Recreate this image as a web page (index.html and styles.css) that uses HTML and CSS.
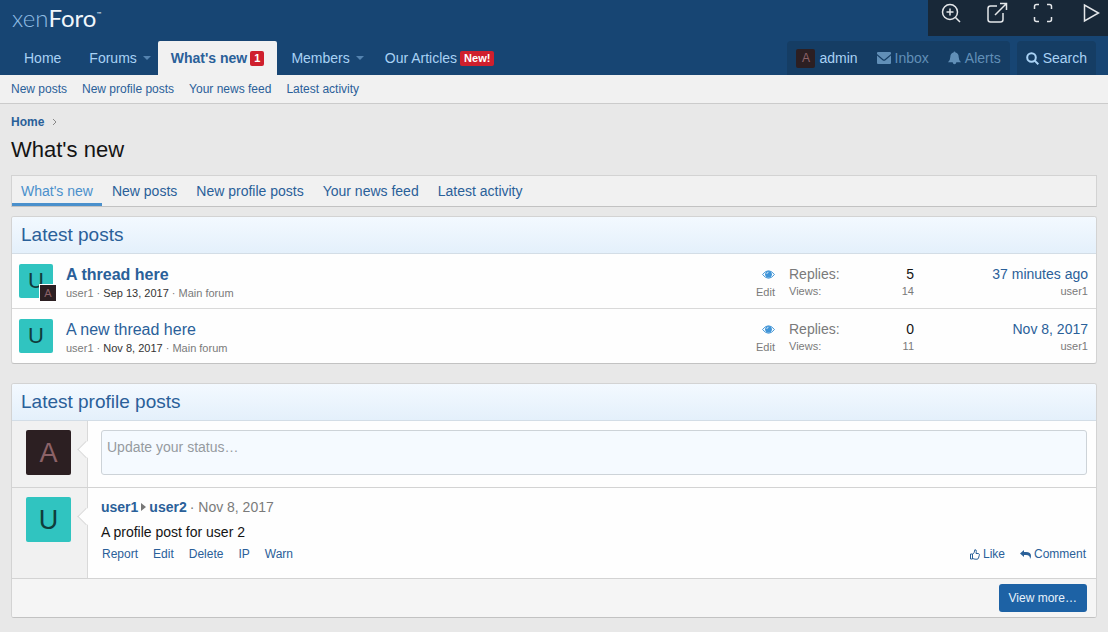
FILE: index.html
```html
<!DOCTYPE html>
<html lang="en">
<head>
<meta charset="utf-8">
<title>What's new | xenForo</title>
<link rel="stylesheet" href="styles.css">
</head>
<body>
<header class="header">
  <a class="logo" href="#"><span class="logo-soft">xen</span>Foro<span class="logo-mark">™</span></a>
  <nav class="nav">
    <div class="nav-item"><a class="nav-link" href="#">Home</a></div>
    <div class="nav-item"><a class="nav-link has-menu" href="#">Forums</a><button class="caret" aria-label="Forums menu"></button></div>
    <div class="nav-item selected"><a class="nav-link" href="#">What's new <span class="badge">1</span></a></div>
    <div class="nav-item"><a class="nav-link has-menu" href="#">Members</a><button class="caret" aria-label="Members menu"></button></div>
    <div class="nav-item"><a class="nav-link" href="#">Our Articles <span class="badge">New!</span></a></div>
    <div class="account">
      <a class="account-link strong" href="#"><span class="avatar avatar-xs dark">A</span>admin</a>
      <a class="account-link" href="#"><svg width="14" height="12" viewBox="0 0 14 12"><path fill="currentColor" d="M1 0h12q1 0 1 1v1L8 7q-1 1-2 0L0 2V1q0-1 1-1zM0 3.600l5.500 4.700q1.500 1 3 0L14 3.600V11q0 1-1 1H1q-1 0-1-1z"/></svg>Inbox</a>
      <a class="account-link" href="#"><svg width="13" height="14" viewBox="0 0 14 14"><path fill="currentColor" d="M7 0q1 0 1 1.200Q11.500 2 11.500 6q0 3.500 2.500 5.500H9q-.3 2.300-2 2.300T5 11.500H0Q2.500 9.500 2.500 6q0-4 3.500-4.800Q6 0 7 0z"/></svg>Alerts</a>
    </div>
    <a class="account-link strong search" href="#"><svg width="13" height="13" viewBox="0 0 13 13" fill="none" stroke="currentColor" stroke-width="2"><circle cx="5.500" cy="5.500" r="4.300"/><path d="M8.600 8.600l3.700 3.700"/></svg>Search</a>
  </nav>
</header>
<div class="viewer-tools">
  <button aria-label="Zoom in"><svg width="22" height="22" viewBox="0 0 22 22"><circle cx="10" cy="10" r="7.500"/><path d="M15.500 15.500L20 20M10 6.500v7M6.500 10h7"/></svg></button>
  <button aria-label="Open in new window"><svg width="22" height="22" viewBox="0 0 22 22"><path d="M11 4H4.500Q2 4 2 6.500v11Q2 20 4.500 20h10q2.500 0 2.500-2.500V11M14 1.500h6.500V8M20.500 1.500L9 13"/></svg></button>
  <button aria-label="Full screen"><svg width="22" height="22" viewBox="0 0 22 22"><path d="M2.500 7V4.500q0-2 2-2H7M15 2.500h2.500q2 0 2 2V7M19.500 15v2.500q0 2-2 2H15M7 19.500H4.500q-2 0-2-2V15"/></svg></button>
  <button aria-label="Play"><svg width="22" height="22" viewBox="0 0 22 22"><path d="M6.500 3v16l14-8z"/></svg></button>
</div>
<nav class="subnav">
  <a href="#">New posts</a><a href="#">New profile posts</a><a href="#">Your news feed</a><a href="#">Latest activity</a>
</nav>
<main class="page">
  <nav class="crumbs"><a href="#">Home</a><svg width="5" height="8" viewBox="0 0 5 8" fill="none" stroke="#888"><path d="M1 1l3 3-3 3"/></svg></nav>
  <h1 class="title">What's new</h1>
  <nav class="tabs">
    <a class="active" href="#">What's new</a><a href="#">New posts</a><a href="#">New profile posts</a><a href="#">Your news feed</a><a href="#">Latest activity</a>
  </nav>
  <section class="block">
    <h2 class="block-title">Latest posts</h2>
    <article class="thread">
      <div class="thread-avatar"><span class="avatar avatar-s teal">U</span><span class="avatar avatar-mini dark">A</span></div>
      <div class="thread-main">
        <a class="thread-title unread" href="#">A thread here</a>
        <div class="minor">user1 · <a class="date" href="#">Sep 13, 2017</a> · Main forum</div>
      </div>
      <div class="thread-extra">
        <svg width="13" height="9" viewBox="0 0 13 9"><path d="M.5 4.500Q6.500-3 12.500 4.500 6.500 12 .5 4.500z" fill="#fff" stroke="#4597d6"/><circle cx="6.500" cy="4.300" r="3.400" fill="#3f94d8"/><path d="M4.800 4q0-1.700 1.700-1.700" fill="none" stroke="#fff" stroke-width=".7"/></svg>
        <a class="minor" href="#">Edit</a>
      </div>
      <dl class="stats"><dt>Replies:</dt><dd>5</dd><dt class="minor">Views:</dt><dd class="minor">14</dd></dl>
      <div class="latest"><a href="#">37 minutes ago</a><span class="minor">user1</span></div>
    </article>
    <article class="thread">
      <div class="thread-avatar"><span class="avatar avatar-s teal">U</span></div>
      <div class="thread-main">
        <a class="thread-title" href="#">A new thread here</a>
        <div class="minor">user1 · <a class="date" href="#">Nov 8, 2017</a> · Main forum</div>
      </div>
      <div class="thread-extra">
        <svg width="13" height="9" viewBox="0 0 13 9"><path d="M.5 4.500Q6.500-3 12.500 4.500 6.500 12 .5 4.500z" fill="#fff" stroke="#4597d6"/><circle cx="6.500" cy="4.300" r="3.400" fill="#3f94d8"/><path d="M4.800 4q0-1.700 1.700-1.700" fill="none" stroke="#fff" stroke-width=".7"/></svg>
        <a class="minor" href="#">Edit</a>
      </div>
      <dl class="stats"><dt>Replies:</dt><dd>0</dd><dt class="minor">Views:</dt><dd class="minor">11</dd></dl>
      <div class="latest"><a href="#">Nov 8, 2017</a><span class="minor">user1</span></div>
    </article>
  </section>
  <section class="block">
    <h2 class="block-title">Latest profile posts</h2>
    <div class="message">
      <div class="message-user"><span class="avatar avatar-m dark">A</span></div>
      <div class="message-body"><textarea class="status" aria-label="Update your status" placeholder="Update your status…"></textarea></div>
    </div>
    <article class="message">
      <div class="message-user"><span class="avatar avatar-m teal">U</span></div>
      <div class="message-body">
        <div class="byline"><a href="#">user1</a><svg width="5" height="8" viewBox="0 0 5 8"><path fill="#777" d="M0 0l5 4-5 4z"/></svg><a href="#">user2</a><span class="byline-date">· Nov 8, 2017</span></div>
        <p class="text">A profile post for user 2</p>
        <div class="actions">
          <a href="#">Report</a><a href="#">Edit</a><a href="#">Delete</a><a href="#">IP</a><a href="#">Warn</a>
          <a class="push" href="#"><svg width="10" height="11" viewBox="0 0 10 11" fill="none" stroke="currentColor"><path d="M.5 5h2v5h-2zM2.500 5.500Q4.800 3.500 4.800.8 6.500.3 6.300 2.500L6 4.500h2.500q1.200.5.800 1.700L8.500 9q-.3 1.200-1.500 1.200H5L2.500 9.500"/></svg>Like</a>
          <a href="#"><svg width="11" height="9" viewBox="0 0 11 9"><path fill="currentColor" d="M4 0v2h2q5 0 5 4 0 1.500-1 3 .3-4-4-4H4v2L0 3.500z"/></svg>Comment</a>
        </div>
      </div>
    </article>
    <footer class="block-footer"><button class="button">View more…</button></footer>
  </section>
</main>
</body>
</html>
```

FILE: styles.css
```css
* { box-sizing: border-box; }
body {
  margin: 0;
  background: #e8e8e8;
  color: #141414;
  font: 14px/20px "Liberation Sans", Arial, sans-serif;
}
a { color: #2a6099; text-decoration: none; }
button { border: 0; padding: 0; background: none; font: inherit; cursor: pointer; }
h1, h2, p, dl, dd { margin: 0; font-weight: 400; }
svg { flex: none; }

.header { background: #174573; }
.logo {
  display: flex;
  width: max-content;
  padding: 3px 0 8px 12px;
  color: #f0f6fb;
  font: 400 24px/30px Lato, sans-serif;
}
.logo-soft { color: #8fbce4; font-weight: 300; }
.logo-mark { font-size: 6px; line-height: 22px; }
.nav { display: flex; padding: 0 12px 0 10px; }
.nav-item { display: flex; height: 34px; border-radius: 2px 2px 0 0; }
.nav-link { display: flex; align-items: center; gap: 3px; padding: 0 14px; color: #a9d2f5; }
.nav-link.has-menu { padding-right: 0; }
.selected { background: #f1f1f1; }
.selected .nav-link { padding: 0 13px; color: #2a6099; font-weight: 700; }
.caret { width: 21px; display: flex; align-items: center; justify-content: center; }
.caret::before { content: ""; border: 4px solid transparent; border-top-color: #5483b0; border-bottom: 0; }
.badge {
  padding: 0 4px;
  border-radius: 2px;
  background: #cf1f2d;
  color: #fff;
  font-size: 11px;
  font-weight: 700;
  line-height: 15px;
}
.account { display: flex; gap: 1px; margin-left: auto; border-radius: 4px 4px 0 0; background: #153d64; }
.account-link { display: flex; align-items: center; gap: 4px; padding: 0 9px; height: 34px; color: #618fb7; }
.account-link.strong { color: #a9d2f5; }
.search { margin-left: 7px; border-radius: 4px 4px 0 0; background: #153d64; }

.viewer-tools {
  position: absolute;
  top: 0;
  right: 0;
  display: flex;
  gap: 24px;
  padding: 2px 8px 12px 12px;
  background: #182838;
}
.viewer-tools svg { display: block; fill: none; stroke: #e4e7ea; stroke-width: 1.5; }

.subnav {
  display: flex;
  gap: 15px;
  padding: 4px 11px;
  border-bottom: 1px solid #cbcbcb;
  background: #f1f1f1;
  font-size: 12px;
}
.page { padding: 9px 11px 14px; }
.crumbs { display: flex; align-items: center; gap: 8px; font-size: 12px; font-weight: 700; line-height: 18px; }
.title { padding: 5px 0 11px; font-size: 22px; line-height: 28px; }
.tabs {
  display: flex;
  gap: 1px;
  margin-bottom: 9px;
  border: 1px solid #d3d3d3;
  border-bottom-color: #c2c2c2;
  background: #f1f1f1;
}
.tabs a { padding: 5px 9px 2px; border-bottom: 3px solid transparent; }
.tabs .active { border-color: #4a90cc; color: #4a90cc; }

.block {
  margin-bottom: 19px;
  border: 1px solid #d3d3d3;
  border-bottom-color: #c2c2c2;
  border-radius: 3px;
  background: #fefefe;
}
.block-title {
  padding: 5px 9px;
  border-bottom: 1px solid #d3dde6;
  border-radius: 2px 2px 0 0;
  background: linear-gradient(#f3f9ff, #e4f0fb);
  color: #2a6099;
  font-size: 19px;
  line-height: 26px;
}
.minor { color: #7a7a7a; font-size: 11px; line-height: 14px; }
.avatar { display: flex; align-items: center; justify-content: center; border-radius: 2px; }
.teal { background: #30c4c0; color: #0f3d3c; }
.dark { background: #2c1f22; color: #8c6268; }
.avatar-xs { width: 19px; height: 19px; font-size: 12px; }
.avatar-s { width: 34px; height: 34px; font-size: 22px; }
.avatar-m { width: 45px; height: 45px; font-size: 27px; }
.avatar-mini {
  position: absolute;
  right: -4px;
  bottom: -4px;
  width: 18px;
  height: 18px;
  border: 1px solid #fff;
  border-radius: 0;
  font-size: 11px;
}

.thread { display: flex; align-items: flex-start; padding: 10px 8px 8px 7px; }
.thread + .thread { border-top: 1px solid #d9d9d9; }
.thread-avatar { position: relative; margin-right: 13px; }
.thread-main { flex: 1; }
.thread-title { display: block; font-size: 16px; line-height: 22px; }
.unread { font-weight: 700; }
.date { color: #333; }
.thread-extra { display: flex; flex-direction: column; align-items: flex-end; gap: 6px; padding-top: 6px; }
.stats { display: grid; grid-template-columns: 1fr auto; width: 125px; margin-left: 14px; color: #7a7a7a; }
.stats dd { text-align: right; }
.stats dd:not(.minor) { color: #141414; }
.latest { display: flex; flex-direction: column; align-items: flex-end; width: 174px; }

.message { display: flex; }
.message + .message { border-top: 1px solid #d3d3d3; }
.message-user { position: relative; padding: 9px 16px 12px 14px; border-right: 1px solid #d9d9d9; background: #f1f1f1; }
.message-user::after {
  content: "";
  position: absolute;
  top: 22px;
  right: -6px;
  width: 11px;
  height: 11px;
  border: 1px solid #d9d9d9;
  border-top-color: transparent;
  border-right-color: transparent;
  background: #fefefe;
  transform: rotate(45deg);
}
.message-body { flex: 1; padding: 9px 9px 12px 13px; }
.status {
  display: block;
  width: 100%;
  height: 45px;
  padding: 6px 5px;
  border: 1px solid #cdd3d8;
  border-radius: 3px;
  background: #f5faff;
  font: inherit;
  resize: none;
}
.status::placeholder { color: #959b9f; }
.byline { display: flex; align-items: center; gap: 3px; }
.byline a { font-weight: 700; }
.byline-date { color: #7a7a7a; }
.text { padding: 5px 0 2px; }
.actions { display: flex; gap: 15px; padding: 0 1px 2px; font-size: 12px; }
.actions a { display: flex; align-items: center; gap: 3px; }
.push { margin-left: auto; }
.block-footer { display: flex; justify-content: flex-end; padding: 5px 9px; border-top: 1px solid #d3d3d3; border-radius: 0 0 2px 2px; background: #f5f5f5; }
.button { padding: 0 10px; border-radius: 3px; background: #1d62a5; color: #e8f2fb; font-size: 12px; line-height: 28px; }
```
